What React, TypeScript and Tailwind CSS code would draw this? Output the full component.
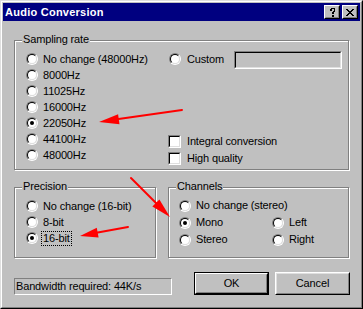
import React from "react";

const Radio = ({ checked = false }: { checked?: boolean }) => (
  <span className="flex h-[12px] w-[12px] shrink-0 rounded-full border border-t-[#808080] border-l-[#808080] border-r-white border-b-white">
    <span className="flex flex-1 items-center justify-center rounded-full border border-t-black border-l-black border-r-[#dfdfdf] border-b-[#dfdfdf] bg-white">
      {checked && <span className="h-[4px] w-[4px] rounded-full bg-black" />}
    </span>
  </span>
);

const Check = () => (
  <span className="flex h-[13px] w-[13px] shrink-0 border border-t-[#808080] border-l-[#808080] border-r-white border-b-white">
    <span className="flex-1 border border-t-black border-l-black border-r-[#dfdfdf] border-b-[#dfdfdf] bg-white" />
  </span>
);

const RadioRow = ({
  label,
  checked = false,
  h = "h-[16px]",
  gap = "gap-[5px]",
  focus = false,
}: {
  label: string;
  checked?: boolean;
  h?: string;
  gap?: string;
  focus?: boolean;
}) => (
  <div className={`flex items-center ${h} ${gap}`}>
    <Radio checked={checked} />
    {focus ? (
      <span className="-ml-[2px] border border-dotted border-black px-[1px] leading-[13px]">{label}</span>
    ) : (
      <span className="leading-[13px] whitespace-nowrap">{label}</span>
    )}
  </div>
);

const Group = ({
  label,
  className,
  children,
}: {
  label: string;
  className: string;
  children: React.ReactNode;
}) => (
  <div
    className={`relative border border-[#808080] shadow-[inset_1px_1px_#fff,1px_1px_#fff] ${className}`}
  >
    <span className="absolute -top-[8px] left-[7px] bg-[#c0c0c0] px-[1px] leading-[13px]">{label}</span>
    {children}
  </div>
);

const CloseGlyph = () => {
  const rows = ["11000011", "01100110", "00111100", "00011000", "00111100", "01100110", "11000011"];
  const rects: React.ReactNode[] = [];
  rows.forEach((r, y) =>
    r.split("").forEach((c, x) => {
      if (c === "1") rects.push(<rect key={`${x}-${y}`} x={x} y={y} width={1} height={1} fill="#000" />);
    })
  );
  return (
    <svg width="8" height="7" viewBox="0 0 8 7" shapeRendering="crispEdges">
      {rects}
    </svg>
  );
};

const HelpGlyph = () => {
  const rows = ["001111", "011001", "011001", "000011", "000110", "000110", "000000", "000110", "000110"];
  const rects: React.ReactNode[] = [];
  rows.forEach((r, y) =>
    r.split("").forEach((c, x) => {
      if (c === "1") rects.push(<rect key={`${x}-${y}`} x={x} y={y} width={1} height={1} fill="#000" />);
    })
  );
  return (
    <svg width="7" height="9" viewBox="0 0 7 9" shapeRendering="crispEdges">
      {rects}
    </svg>
  );
};

const CaptionButton = ({ children }: { children: React.ReactNode }) => (
  <div className="flex h-[14px] w-[16px] border border-t-white border-l-white border-r-black border-b-black bg-[#c0c0c0]">
    <div className="flex flex-1 items-center justify-center border border-t-[#c0c0c0] border-l-[#c0c0c0] border-r-[#808080] border-b-[#808080]">
      {children}
    </div>
  </div>
);

export default function App() {
  return (
    <div className="relative h-[309px] w-[363px] border border-t-[#dfdfdf] border-l-[#dfdfdf] border-r-black border-b-black bg-[#c0c0c0] font-['Liberation_Sans',Arial,sans-serif] text-[11px] tracking-[-0.15px] text-black">
      <div className="flex h-full flex-col border border-t-white border-l-white border-r-[#808080] border-b-[#808080] p-[1px]">
        {/* Title bar */}
        <div className="flex h-[18px] items-center bg-[#000080] pl-[2px] pr-[2px]">
          <span className="text-[11px] font-bold tracking-[0.25px] text-white leading-[13px]">Audio Conversion</span>
          <div className="ml-auto flex gap-[2px]">
            <CaptionButton>
              <HelpGlyph />
            </CaptionButton>
            <CaptionButton>
              <CloseGlyph />
            </CaptionButton>
          </div>
        </div>

        {/* Body */}
        <div className="flex flex-col pl-[11px]">
          <Group label="Sampling rate" className="mt-[19px] flex h-[130px] w-[335px] pl-[11px] pr-[6px] pt-[10px]">
            <div className="flex w-[142px] flex-col">
              <RadioRow label="No change (48000Hz)" />
              <RadioRow label="8000Hz" />
              <RadioRow label="11025Hz" />
              <RadioRow label="16000Hz" />
              <RadioRow label="22050Hz" checked />
              <RadioRow label="44100Hz" />
              <RadioRow label="48000Hz" />
            </div>
            <div className="flex flex-1 flex-col">
              <div className="flex h-[16px] items-center pl-[1px]">
                <Radio />
                <span className="ml-[6px] leading-[13px]">Custom</span>
                <div className="ml-auto mt-[2px] flex h-[18px] w-[108px] border border-t-[#808080] border-l-[#808080] border-r-white border-b-white">
                  <div className="flex-1 border border-t-black border-l-black border-r-[#dfdfdf] border-b-[#dfdfdf] bg-[#c0c0c0]" />
                </div>
              </div>
              <div className="mt-[66px] flex h-[17px] items-center gap-[6px]">
                <Check />
                <span className="leading-[13px]">Integral conversion</span>
              </div>
              <div className="flex h-[17px] items-center gap-[6px]">
                <Check />
                <span className="leading-[13px]">High quality</span>
              </div>
            </div>
          </Group>

          <div className="mt-[17px] flex gap-[12px]">
            <Group label="Precision" className="flex h-[71px] w-[142px] flex-col pl-[11px] pt-[10px]">
              <RadioRow label="No change (16-bit)" />
              <RadioRow label="8-bit" />
              <RadioRow label="16-bit" checked focus />
            </Group>
            <Group label="Channels" className="h-[71px] w-[181px] pl-[10px] pt-[9px]">
              <div className="grid grid-cols-[93px_1fr]">
                <div className="col-span-2">
                  <RadioRow label="No change (stereo)" h="h-[17px]" />
                </div>
                <RadioRow label="Mono" checked h="h-[17px]" />
                <RadioRow label="Left" h="h-[17px]" />
                <RadioRow label="Stereo" h="h-[17px]" />
                <RadioRow label="Right" h="h-[17px]" />
              </div>
            </Group>
          </div>

          <div className="mt-[14px] flex items-end">
            <div className="flex h-[17px] w-[158px] items-center border border-t-[#808080] border-l-[#808080] border-r-white border-b-white pl-[1px]">
              <span className="leading-[13px]">Bandwidth required: 44K/s</span>
            </div>
            <div className="ml-[22px] flex h-[23px] w-[75px] border border-black">
              <div className="flex flex-1 items-center justify-center border border-t-white border-l-white border-r-black border-b-black">
                <div className="flex h-full w-full items-center justify-center border border-t-[#c0c0c0] border-l-[#c0c0c0] border-r-[#808080] border-b-[#808080]">
                  <span className="leading-[13px]">OK</span>
                </div>
              </div>
            </div>
            <div className="ml-[6px] flex h-[23px] w-[75px] border border-t-white border-l-white border-r-black border-b-black">
              <div className="flex flex-1 items-center justify-center border border-t-[#dfdfdf] border-l-[#dfdfdf] border-r-[#808080] border-b-[#808080]">
                <span className="leading-[13px]">Cancel</span>
              </div>
            </div>
          </div>
        </div>
      </div>

      {/* Red annotation arrows */}
      <svg
        className="pointer-events-none absolute -left-[1px] -top-[1px]"
        width="363"
        height="309"
        viewBox="0 0 363 309"
      >
        <g stroke="#ff0000" strokeWidth="2" fill="#ff0000" strokeLinecap="round">
          <line x1="182" y1="110" x2="115" y2="119.5" />
          <polygon points="99,122 119.5,124.3 118.1,114.2" stroke="none" />
          <line x1="128" y1="227" x2="95" y2="233" />
          <polygon points="80,236 98.6,237.6 96.8,227.8" stroke="none" />
          <line x1="131" y1="178" x2="158" y2="205" />
          <polygon points="170,217 152.4,206.4 159.4,199.4" stroke="none" />
        </g>
      </svg>
    </div>
  );
}
